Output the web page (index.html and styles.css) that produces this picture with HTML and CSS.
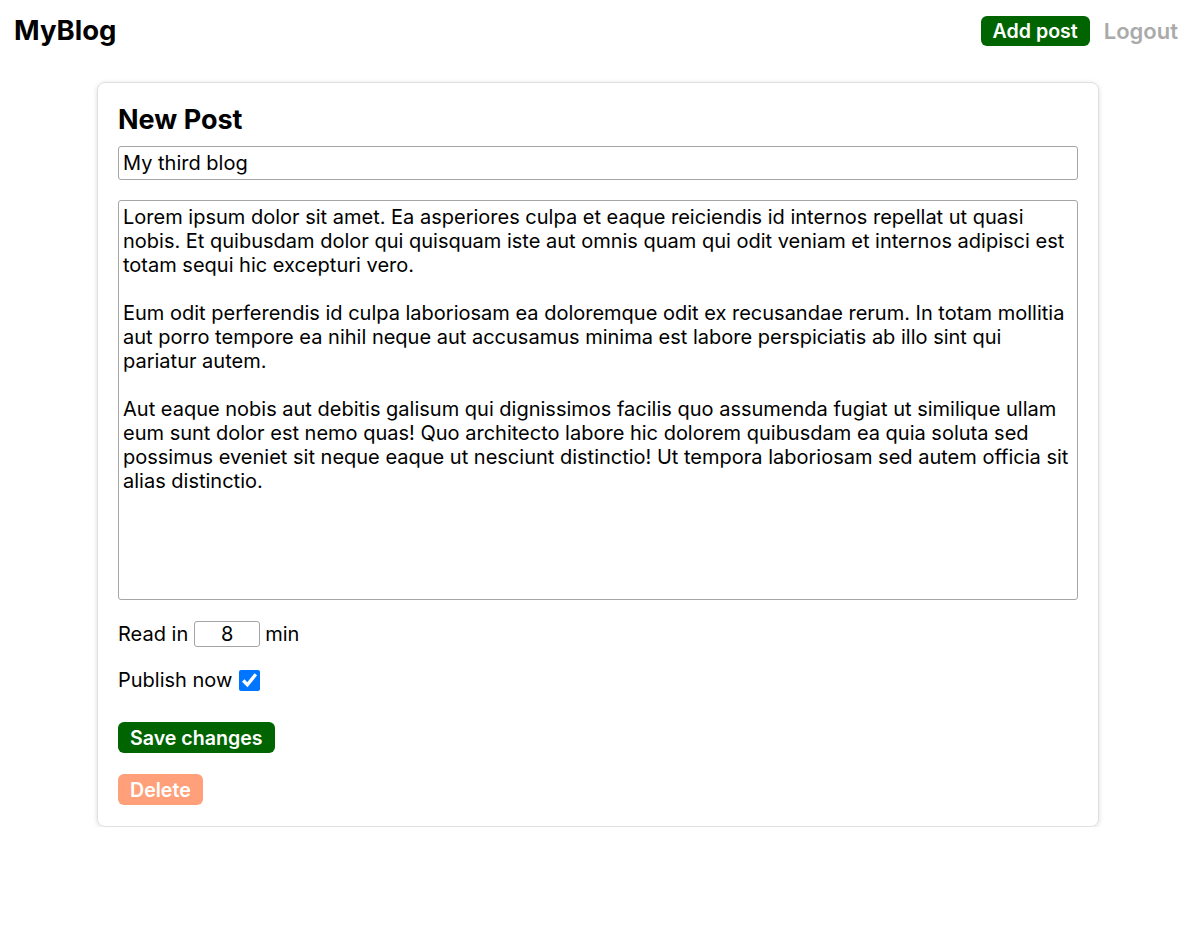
FILE: index.html
```html
<!DOCTYPE html>
<html lang="en">
<head>
<meta charset="utf-8">
<title>MyBlog</title>
<link rel="stylesheet" href="styles.css">
</head>
<body>
<header class="topbar">
  <div class="brand">MyBlog</div>
  <nav class="nav">
    <button class="btn btn-green">Add post</button>
    <a class="logout" href="#">Logout</a>
  </nav>
</header>
<main class="card">
  <h2 class="card-title">New Post</h2>
  <input class="title-input" type="text" value="My third blog">
  <textarea class="body-input">Lorem ipsum dolor sit amet. Ea asperiores culpa et eaque reiciendis id internos repellat ut quasi nobis. Et quibusdam dolor qui quisquam iste aut omnis quam qui odit veniam et internos adipisci est totam sequi hic excepturi vero.

Eum odit perferendis id culpa laboriosam ea doloremque odit ex recusandae rerum. In totam mollitia aut porro tempore ea nihil neque aut accusamus minima est labore perspiciatis ab illo sint qui pariatur autem.

Aut eaque nobis aut debitis galisum qui dignissimos facilis quo assumenda fugiat ut similique ullam eum sunt dolor est nemo quas! Quo architecto labore hic dolorem quibusdam ea quia soluta sed possimus eveniet sit neque eaque ut nesciunt distinctio! Ut tempora laboriosam sed autem officia sit alias distinctio.</textarea>
  <div class="row read-row">
    <span>Read in</span>
    <input class="num-input" type="text" value="8">
    <span>min</span>
  </div>
  <div class="row publish-row">
    <span>Publish now</span>
    <input class="check" type="checkbox" checked>
  </div>
  <div class="actions">
    <button class="btn btn-green">Save changes</button>
    <button class="btn btn-salmon">Delete</button>
  </div>
</main>
</body>
</html>
```

FILE: styles.css
```css
* { box-sizing: border-box; }
html, body { margin: 0; padding: 0; background: #fff; }
body {
  font-family: Inter, "Noto Sans", sans-serif;
  font-size: 20px;
  color: #000;
}
.topbar {
  height: 62px;
  display: flex;
  align-items: center;
  justify-content: space-between;
  padding: 0 18px 0 14px;
}
.brand {
  font-size: 27.5px;
  font-weight: 700;
  margin-top: -2px;
}
.nav {
  display: flex;
  align-items: center;
  gap: 14px;
}
.btn {
  font-family: inherit;
  font-size: 19.6px;
  font-weight: 600;
  color: #fff;
  border: none;
  border-radius: 6px;
  padding: 1px 12px 0;
  height: 31px;
  line-height: 30px;
  cursor: pointer;
}
.nav .btn { height: 30px; line-height: 29px; }
.btn-green { background: #006400; }
.btn-salmon { background: #ffa07a; }
.logout {
  color: #aaa;
  font-weight: 600;
  font-size: 22px;
  text-decoration: none;
}
.card {
  width: 1002px;
  margin: 20px auto 0;
  padding: 21px 20px 21px;
  border: 1px solid #e0e0e0;
  border-radius: 8px;
  box-shadow: 0 1px 5px rgba(0,0,0,0.14);
  display: flex;
  flex-direction: column;
  align-items: flex-start;
}
.card-title {
  margin: 0;
  font-size: 27px;
  font-weight: 700;
  line-height: 32px;
}
.title-input {
  margin-top: 10px;
  width: 100%;
  height: 34px;
  font-family: inherit;
  font-size: 20px;
  padding: 0 4px;
  border: 1px solid #a5a5a5;
  border-radius: 3px;
  color: #000;
}
.body-input {
  margin-top: 20px;
  width: 100%;
  height: 400px;
  font-family: inherit;
  font-size: 20px;
  line-height: 24px;
  padding: 4px 4px 3px;
  border: 1px solid #a5a5a5;
  border-radius: 3px;
  resize: none;
  color: #000;
}
.row {
  display: flex;
  align-items: center;
  height: 26px;
  gap: 5px;
}
.read-row { margin-top: 21px; }
.num-input {
  width: 66px;
  height: 26px;
  margin-left: 1px;
  font-family: inherit;
  font-size: 20px;
  text-align: center;
  border: 1px solid #a5a5a5;
  border-radius: 3px;
  padding: 0;
  color: #000;
}
.publish-row { margin-top: 20px; }
.check {
  width: 21px;
  height: 21px;
  margin: 0 0 0 2px;
  accent-color: #0075ff;
}
.actions {
  margin-top: 29px;
  display: flex;
  flex-direction: column;
  align-items: flex-start;
  gap: 21px;
}
```
